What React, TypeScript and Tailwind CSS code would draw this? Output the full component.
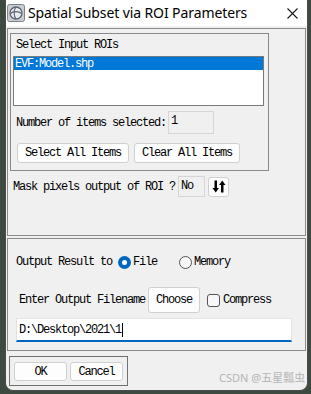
import React from "react";

const mono = "font-['Liberation_Mono',monospace] text-[12px] tracking-[-1.2px] text-black leading-none";

function Btn({ w, h, children, className = "" }: { w: string; h: string; children: React.ReactNode; className?: string }) {
  return (
    <div className={`${w} ${h} ${className} flex items-center justify-center bg-[#fdfdfd] border border-[#d0d0d0] rounded-[3px] ${mono}`}>
      {children}
    </div>
  );
}

function ArrowsIcon() {
  return (
    <svg width="14" height="13" viewBox="0 0 14 13">
      <path d="M2.5 0.5 H5 V8 H7 L3.75 12.5 L0.5 8 H2.5 Z" fill="#000" />
      <path d="M9 12.5 H11.5 V5 H13.5 L10.25 0.5 L7 5 H9 Z" fill="#000" />
    </svg>
  );
}

function TitleIcon() {
  return (
    <svg width="18" height="18" viewBox="0 0 18 18">
      <rect x="0.5" y="0.5" width="17" height="17" rx="2" fill="#c9ccd0" stroke="#7d8288" />
      <circle cx="9" cy="9" r="6" fill="#e9ecef" stroke="#5d6470" strokeWidth="1.3" />
      <path d="M3.5 9.5 C6 7, 12 7, 14.5 9.5" fill="none" stroke="#5d6470" strokeWidth="1.1" />
      <path d="M9 3 C6.5 6, 6.5 12, 9 15" fill="none" stroke="#5d6470" strokeWidth="1.1" />
    </svg>
  );
}

export default function App() {
  return (
    <div className="w-[311px] h-[394px] overflow-hidden bg-[#3d4a40] pl-[5px] relative">
      <div className="w-[303px] h-[391px] bg-[#f0f0f0] border border-t-0 border-[#4c4c4c] rounded-b-[8px] flex flex-col overflow-hidden">
        {/* title bar */}
        <div className="h-[26px] bg-white flex items-center shrink-0">
          <div className="ml-[1px] mt-[-1px]">
            <TitleIcon />
          </div>
          <div className="ml-[3px] font-['Noto_Sans',sans-serif] text-[14px] text-black leading-none tracking-[-0.1px]">
            Spatial Subset via ROI Parameters
          </div>
          <div className="ml-auto mr-[9px]">
            <svg width="11" height="11" viewBox="0 0 11 11">
              <path d="M0.5 0.5 L10.5 10.5 M10.5 0.5 L0.5 10.5" stroke="#1a1a1a" strokeWidth="1.1" />
            </svg>
          </div>
        </div>

        {/* frame 1 */}
        <div className="mx-[1px] mt-[2px] h-[208px] border border-[#8a8a8a] flex flex-col shrink-0">
          <div className="ml-[2px] mt-[4px] w-[259px] h-[138px] border border-[#8a8a8a] flex flex-col">
            <div className={`h-[22px] flex items-center pl-[5px] ${mono}`}>Select Input ROIs</div>
            <div className="ml-[2px] w-[251px] h-[50px] border border-[#7a7a7a] bg-white">
              <div className={`h-[13px] bg-[#0078d7] flex items-center pl-[1px] ${mono} text-white`}>
                <span className="text-white">EVF:Model.shp</span>
              </div>
            </div>
            <div className="mt-[5px] h-[23px] flex items-center">
              <div className={`pl-[5px] ${mono}`}>Number of items selected:</div>
              <div className={`ml-[2px] w-[46px] h-[23px] border border-[#d6d6d6] bg-[#f0f0f0] pl-[2px] pt-[3px] ${mono}`}>1</div>
            </div>
            <div className="mt-[9px] h-[20px] flex pl-[6px] gap-[5px]">
              <Btn w="w-[112px]" h="h-[20px]">Select All Items</Btn>
              <Btn w="w-[106px]" h="h-[20px]">Clear All Items</Btn>
            </div>
          </div>
          <div className="mt-[5px] h-[21px] flex items-center">
            <div className={`pl-[5px] ${mono}`}>Mask pixels output of ROI ?</div>
            <div className={`ml-[3px] w-[27px] h-[21px] border border-[#d6d6d6] bg-[#f0f0f0] pl-[2px] pt-[3px] ${mono}`}>No</div>
            <div className="ml-[3px] w-[21px] h-[20px] flex items-center justify-center bg-[#fdfdfd] border border-[#d0d0d0] rounded-[3px]">
              <ArrowsIcon />
            </div>
          </div>
        </div>

        {/* frame 2 */}
        <div className="mx-[1px] mt-[2px] h-[113px] border border-[#8a8a8a] flex flex-col shrink-0">
          <div className="mt-[13px] h-[20px] flex items-center">
            <div className={`pl-[8px] ${mono}`}>Output Result to</div>
            <div className="ml-[6px] w-[13px] h-[13px] rounded-full bg-[#0067c0] flex items-center justify-center">
              <div className="w-[5px] h-[5px] rounded-full bg-white" />
            </div>
            <div className={`ml-[2px] ${mono}`}>File</div>
            <div className="ml-[22px] w-[13px] h-[13px] rounded-full border border-[#555] bg-[#f7f7f7]" />
            <div className={`ml-[2px] ${mono}`}>Memory</div>
          </div>
          <div className="mt-[15px] h-[26px] flex items-center">
            <div className={`pl-[11px] ${mono}`}>Enter Output Filename</div>
            <Btn w="w-[52px]" h="h-[26px]" className="ml-[3px]">Choose</Btn>
            <div className="ml-[7px] w-[13px] h-[13px] rounded-[3px] border border-[#555] bg-[#f7f7f7]" />
            <div className={`ml-[3px] ${mono}`}>Compress</div>
          </div>
          <div className="mt-[5px] ml-[8px] w-[276px] h-[24px] bg-white border border-[#e3e3e3] border-b-2 border-b-[#0067c0] flex items-center pl-[2px]">
            <span className={mono}>D:\Desktop\2021\1</span>
            <span className="ml-[1px] w-[1px] h-[14px] bg-black" />
          </div>
        </div>

        {/* frame 3 */}
        <div className="ml-[3px] mt-[5px] w-[119px] h-[30px] border border-[#707070] flex pl-[4px] pt-[5px] gap-[3px] shrink-0">
          <Btn w="w-[53px]" h="h-[19px]">OK</Btn>
          <Btn w="w-[53px]" h="h-[19px]">Cancel</Btn>
        </div>
      </div>
      <div className="absolute left-[219px] top-[372px] font-['Noto_Sans','Noto_Sans_CJK_SC',sans-serif] text-[11px] leading-none text-[#b5b5b5]">
        CSDN @五星瓢虫
      </div>
    </div>
  );
}
